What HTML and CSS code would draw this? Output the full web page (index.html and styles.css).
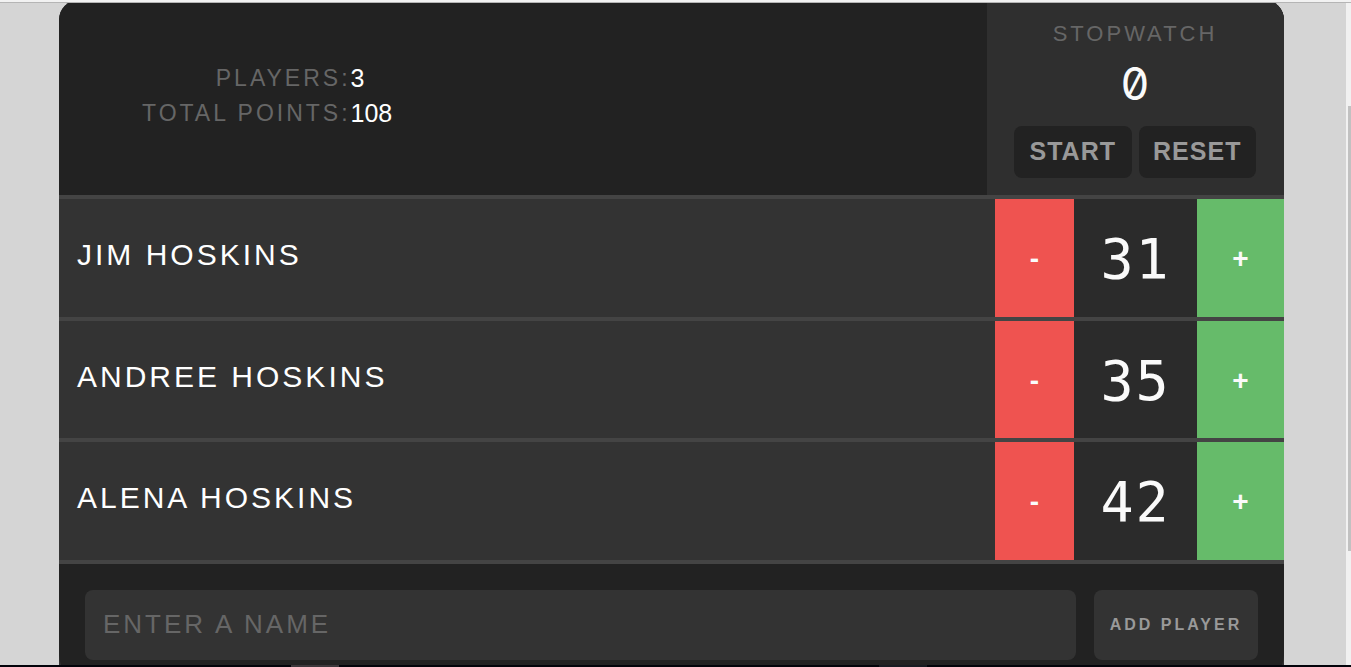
FILE: index.html
```html
<!DOCTYPE html>
<html lang="en">
<head>
<meta charset="utf-8">
<title>Scoreboard</title>
<link rel="stylesheet" href="styles.css">
</head>
<body>
<div class="window-top"></div>
<div class="viewport">
  <main class="scoreboard">
    <header class="header">
      <table class="stats">
        <tbody>
          <tr><th scope="row">Players:</th><td>3</td></tr>
          <tr><th scope="row">Total Points:</th><td>108</td></tr>
        </tbody>
      </table>
      <section class="stopwatch">
        <h2>Stopwatch</h2>
        <div class="stopwatch-time">0</div>
        <div class="stopwatch-actions">
          <button type="button">Start</button>
          <button type="button">Reset</button>
        </div>
      </section>
    </header>
    <div class="players">
      <div class="player">
        <div class="player-name">Jim Hoskins</div>
        <div class="counter">
          <button type="button" class="counter-action decrement">-</button>
          <div class="counter-score">31</div>
          <button type="button" class="counter-action increment">+</button>
        </div>
      </div>
      <div class="player">
        <div class="player-name">Andree Hoskins</div>
        <div class="counter">
          <button type="button" class="counter-action decrement">-</button>
          <div class="counter-score">35</div>
          <button type="button" class="counter-action increment">+</button>
        </div>
      </div>
      <div class="player">
        <div class="player-name">Alena Hoskins</div>
        <div class="counter">
          <button type="button" class="counter-action decrement">-</button>
          <div class="counter-score">42</div>
          <button type="button" class="counter-action increment">+</button>
        </div>
      </div>
    </div>
    <form class="add-player">
      <input type="text" placeholder="ENTER A NAME" aria-label="Enter a name">
      <button type="submit">Add Player</button>
    </form>
  </main>
  <div class="scrollbar"><div class="scrollbar-thumb"></div></div>
</div>
<div class="window-bottom"><span class="task"></span><span class="task task-dim"></span></div>
</body>
</html>
```
FILE: styles.css
```css
* { box-sizing: border-box; }

body {
  margin: 0;
  height: 100vh;
  overflow: hidden;
  background: #d5d5d5;
  color: #fff;
  font-family: "Liberation Sans", Arial, sans-serif;
  text-transform: uppercase;
}

button, input {
  font-family: inherit;
  text-transform: inherit;
  border: 0;
  border-radius: 8px;
}

/* window edges, drawn over the page */
.window-top {
  position: fixed;
  inset: 0 0 auto;
  z-index: 1;
  height: 3px;
  background: #f2f2f2;
  border-bottom: 1px solid #b5b5b5;
}

.window-bottom {
  position: fixed;
  inset: auto 0 0;
  z-index: 1;
  display: flex;
  gap: 540px;
  height: 2px;
  padding-left: 291px;
  background: #02030a;
}

.task { width: 48px; background: #3c373b; }
.task-dim { background: #181b22; }

.viewport {
  display: flex;
  height: 100%;
}

.scoreboard {
  flex: 1;
  align-self: flex-start;
  margin: 0 62px 0 59px;
  background: #333;
  border-radius: 20px 20px 0 0;
  overflow: hidden;
}

.header {
  display: flex;
  justify-content: space-between;
  align-items: center;
  background: #222;
  border-bottom: 4px solid #444;
}

.stats {
  margin: 0 0 4px 83px;
  border-collapse: collapse;
}

.stats th, .stats td {
  padding: 0;
  height: 35px;
}

.stats th {
  color: #666;
  font-size: 23px;
  font-weight: 400;
  letter-spacing: 3px;
  text-align: right;
}

.stats td { font-size: 25px; }

.stopwatch {
  width: 297px;
  padding: 21px 28px 17px 27px;
  background: #2f2f2f;
  text-align: center;
}

.stopwatch h2 {
  margin: 0;
  color: #666;
  font-size: 22px;
  font-weight: 400;
  line-height: 26px;
  letter-spacing: 3px;
}

.stopwatch-time {
  padding-top: 7px;
  margin-bottom: 12px;
  color: #fafafa;
  font-family: Inter, sans-serif;
  font-feature-settings: "zero";
  font-size: 45px;
  line-height: 60px;
}

.stopwatch-actions { display: flex; gap: 7px; }

.stopwatch-actions button {
  flex: 1;
  height: 52px;
  padding: 0 0 2px;
  background: #222;
  color: #999;
  font-size: 25px;
  font-weight: 700;
  letter-spacing: 1px;
}

.player {
  display: flex;
  height: 122px;
  border-bottom: 4px solid #444;
}

.player:nth-child(2) { height: 121px; }

.player-name {
  flex: 1;
  padding: 38px 18px 0;
  font-size: 30px;
  line-height: 36px;
  letter-spacing: 3px;
}

.counter {
  display: grid;
  grid-template-columns: 79px 123px 87px;
  background: #2b2b2b;
}

.counter-action {
  padding: 2px 0 0;
  border-radius: 0;
  color: #fafafa;
  font-size: 28px;
  font-weight: 700;
}

.decrement { background: #ef5350; }
.increment { background: #66bb6a; }

.counter-score {
  padding-top: 4px;
  color: #fafafa;
  font-family: "DejaVu Sans Mono", monospace;
  font-size: 55px;
  line-height: 113px;
  letter-spacing: 2px;
  text-align: center;
}

.add-player {
  display: flex;
  gap: 18px;
  padding: 26px;
  background: #222;
  border-radius: 0 0 32px 32px;
}

.add-player input {
  flex: 1;
  min-width: 0;
  height: 70px;
  padding: 0 18px 2px;
  background: #333;
  color: #fff;
  font-size: 26px;
  letter-spacing: 3px;
}

.add-player input::placeholder { color: #666; opacity: 1; }

.add-player button {
  width: 164px;
  padding: 0;
  background: #333;
  color: #999;
  font-size: 16px;
  font-weight: 700;
  letter-spacing: 3px;
}

.scrollbar {
  width: 5px;
  padding: 106px 0 0 2px;
  background: #f1f1f1;
}

.scrollbar-thumb { height: 445px; background: #c1c1c1; }
```
